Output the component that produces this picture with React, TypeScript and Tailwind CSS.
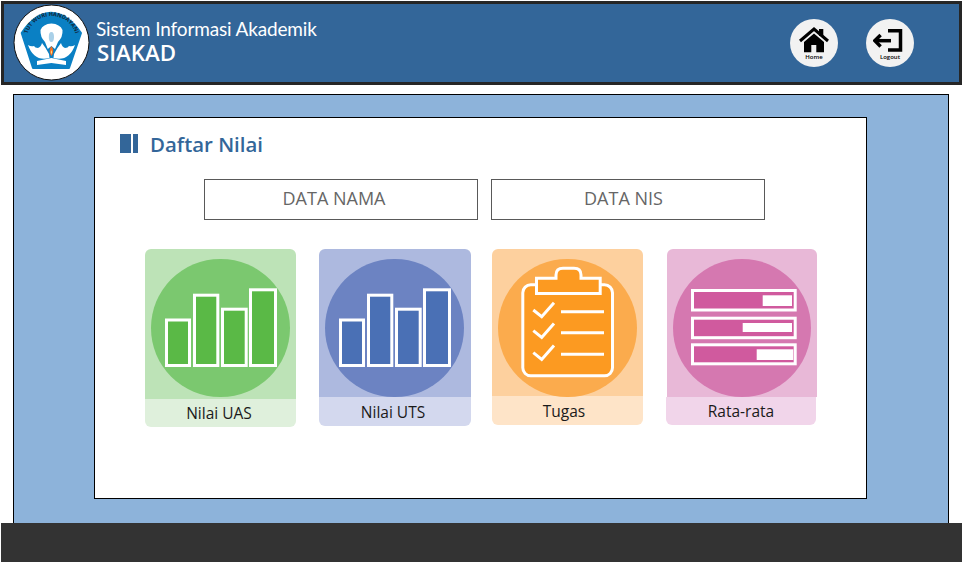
const font = { sans: "font-['Open_Sans',sans-serif]" };

function Logo() {
  return (
    <svg width="78" height="78" viewBox="0 0 78 78" className="shrink-0">
      <circle cx="38.5" cy="38.5" r="37.5" fill="#fff" stroke="#111" strokeWidth="1" />
      <path d="M8.7 29 Q22 9 38 8.7 Q54 9 68 29 L56 64 L20 64 Z" fill="#0a80c4" stroke="#0a80c4" strokeWidth="2" strokeLinejoin="round" />
      <defs>
        <path id="logo-arc" d="M13.5 37 A25 25 0 0 1 63.5 37" />
      </defs>
      <text fontSize="5.6" fontWeight="700" fill="#10283c" fontFamily="Open Sans, sans-serif">
        <textPath href="#logo-arc" startOffset="50%" textAnchor="middle">TUT WURI HANDAYANI</textPath>
      </text>
      <path d="M27.5 26 Q30 20 38.4 19.5 Q47 20 49.5 26 Q50 33 45 38 L42 45 L38.4 42 L34.8 45 L32 38 Q27 33 27.5 26 Z" fill="#fff" />
      <ellipse cx="38.4" cy="33" rx="2.6" ry="5" fill="#a9d0e8" />
      <path d="M15 41 Q18 43 21 42 Q22 44 25 44 Q28 43 29 39 Q33 44 36 50 L36.5 54 Q21 58 15 41 Z" fill="#fff" />
      <path d="M62 41 Q59 43 56 42 Q55 44 52 44 Q49 43 48 39 Q44 44 41 50 L40.5 54 Q56 58 62 41 Z" fill="#fff" />
      <path d="M38.4 42 Q42 47 38.4 52 Q35 47 38.4 42 Z" fill="#f37021" />
      <path d="M38.4 46 Q40 48 38.4 50.5 Q37 48 38.4 46 Z" fill="#fce08a" />
      <path d="M24 57 L38.4 54 L53 57 L53 61 L38.4 59 L24 61 Z" fill="#fff" />
    </svg>
  );
}

function HomeIcon() {
  return (
    <svg width="32" height="28" viewBox="0 0 32 28">
      <path d="M21 4 H25.3 V11 H21 Z" fill="#000" />
      <path d="M2 16 L16 4 L30 16" fill="none" stroke="#000" strokeWidth="3" />
      <path d="M6 17 L16 8.5 L26 17 V27.3 H18.3 V20 H13.3 V27.3 H6 Z" fill="#000" />
    </svg>
  );
}

function LogoutIcon() {
  return (
    <svg width="34" height="28" viewBox="0 0 34 28" fill="none" stroke="#000" strokeWidth="3.5">
      <path d="M15 5.75 H27.5 V25 H15" />
      <path d="M2.5 15.7 H18" />
      <path d="M7.6 10 L1.8 15.7 L7.6 21.5" />
    </svg>
  );
}

function BarIcon({ fill }: { fill: string }) {
  return (
    <svg width="139" height="139" viewBox="0 0 139 139" fill={fill} stroke="#fff" strokeWidth="3">
      <rect x="15.5" y="61" width="23" height="45.5" />
      <rect x="43.5" y="36.2" width="23.3" height="70.3" />
      <rect x="71.5" y="50.2" width="23.7" height="56.3" />
      <rect x="99.5" y="30.8" width="25" height="75.7" />
    </svg>
  );
}

function ClipboardIcon() {
  return (
    <svg width="139" height="139" viewBox="0 0 139 139" fill="none" stroke="#fff" strokeWidth="3">
      <rect x="24.8" y="25.8" width="89.7" height="91" rx="8" fill="#fc9a21" />
      <path d="M38.5 34.5 V19.2 H58 V16 Q58 9.2 65 9.2 H76 Q83 9.2 83 16 V19.2 H102.2 V34.5 Z" fill="#fc9a21" />
      <path d="M35.3 51 L43.7 57.7 L56 43.7 M35.3 71.7 L43.7 78.4 L56 64.4 M35.3 93.7 L43.7 100.4 L56 86.4" />
      <path d="M63 52.7 H106 M63 73.7 H106 M63 95.3 H106" />
    </svg>
  );
}

function ProgressIcon() {
  return (
    <svg width="139" height="139" viewBox="0 0 139 139">
      <g fill="#d05a9e" stroke="#fff" strokeWidth="3">
        <rect x="19.5" y="31.5" width="102.7" height="19.5" />
        <rect x="19.5" y="59.2" width="102.7" height="19.5" />
        <rect x="19.5" y="85.8" width="102.7" height="19" />
      </g>
      <g fill="#fff">
        <rect x="89.7" y="36.3" width="29.3" height="10.7" />
        <rect x="69.7" y="64" width="49.3" height="9" />
        <rect x="83.7" y="90.3" width="36.6" height="10.7" />
      </g>
    </svg>
  );
}

const cards = [
  { label: 'Nilai UAS', top: 'h-[150px] bg-[#bde3b7]', circle: 'w-[139px] bg-[#7bc86f]', bottom: 'h-[28px] pr-[3px] pt-[2px] bg-[#dff0dc]', box: 'w-[151px]', icon: <BarIcon fill="#5ab946" /> },
  { label: 'Nilai UTS', top: 'h-[148px] bg-[#adb9df]', circle: 'w-[139px] mr-px bg-[#6c83c2]', bottom: 'h-[29px] pr-[4px] pt-[2px] bg-[#d3d8ee]', box: 'w-[152px] ml-[23px]', icon: <BarIcon fill="#4a70b5" /> },
  { label: 'Tugas', top: 'h-[147px] bg-[#fdd09e]', circle: 'w-[139px] bg-[#fbab4d]', bottom: 'h-[29px] pr-[7px] pt-[3px] bg-[#fee4c8]', box: 'w-[151px] ml-[21px]', icon: <ClipboardIcon /> },
  { label: 'Rata-rata', top: 'h-[148px] bg-[#e8b8d7]', circle: 'w-[138px] bg-[#d578b0]', bottom: 'h-[28px] w-[150px] -ml-px pt-[2px] bg-[#f1d5ea]', box: 'w-[150px] ml-[24px]', icon: <ProgressIcon /> },
];

export default function App() {
  return (
    <div className={`w-[962px] h-[562px] overflow-hidden bg-white flex flex-col ${font.sans}`}>
      {/* Header */}
      <header className="ml-px mt-px h-[84px] bg-[#336699] border-[3px] border-[#262626] flex items-center pl-[9px] shrink-0">
        <Logo />
        <div className="ml-[5px] mb-[5px] text-white">
          <div className="font-['Lato',sans-serif] text-[19px] leading-[24px] tracking-[-0.15px]">Sistem Informasi Akademik</div>
          <div className="ml-px text-[22.3px] leading-[24px] font-semibold">SIAKAD</div>
        </div>
        <div className="ml-auto mr-[45px] flex gap-[28px]">
          <div className="w-[48px] h-[48px] rounded-full bg-[#f2f2f2] flex flex-col items-center pt-[6px]">
            <HomeIcon />
            <span className="text-[6px] leading-[8px] font-semibold text-black">Home</span>
          </div>
          <div className="w-[48px] h-[48px] rounded-full bg-[#f2f2f2] flex flex-col items-center pt-[6px]">
            <LogoutIcon />
            <span className="text-[6px] leading-[8px] font-semibold text-black">Logout</span>
          </div>
        </div>
      </header>

      {/* Main */}
      <main className="ml-[13px] mt-[9px] w-[936px] flex-1 bg-[#8db3da] border border-black border-b-0 pt-[22px] pl-[80px]">
        <section className="w-[773px] h-[382px] bg-white border border-black">
          <div className="flex items-center pl-[25px] pt-[16px] h-[38px]">
            <div className="w-[11px] h-[19px] mb-[3px] bg-[#336699]" />
            <div className="w-[5px] h-[19px] mb-[3px] bg-[#336699] ml-[2px]" />
            <h1 className="ml-[12px] mb-[2px] text-[20.4px] leading-[26px] font-semibold text-[#336699]">Daftar Nilai</h1>
          </div>
          <div className="flex ml-[109px] mt-[23px] gap-[13px]">
            <div className="w-[274px] h-[41px] pr-[14px] pb-[2px] border border-[#595959] flex items-center justify-center text-[18px] text-[#666666]">DATA NAMA</div>
            <div className="w-[274px] h-[41px] pr-[9px] pb-[2px] border border-[#595959] flex items-center justify-center text-[18px] text-[#666666]">DATA NIS</div>
          </div>
          <div className="flex ml-[50px] mt-[29px]">
            {cards.map((c) => (
              <div key={c.label} className={c.box}>
                <div className={`${c.top} rounded-t-[6px] pt-[10px] flex justify-center`}>
                  <div className={`h-[138px] rounded-full ${c.circle}`}>{c.icon}</div>
                </div>
                <div className={`${c.bottom} rounded-b-[6px] flex items-center justify-center text-[15.5px] text-[#1a1a1a]`}>{c.label}</div>
              </div>
            ))}
          </div>
        </section>
      </main>

      {/* Footer */}
      <footer className="ml-px h-[39px] bg-[#333333] shrink-0" />
    </div>
  );
}
